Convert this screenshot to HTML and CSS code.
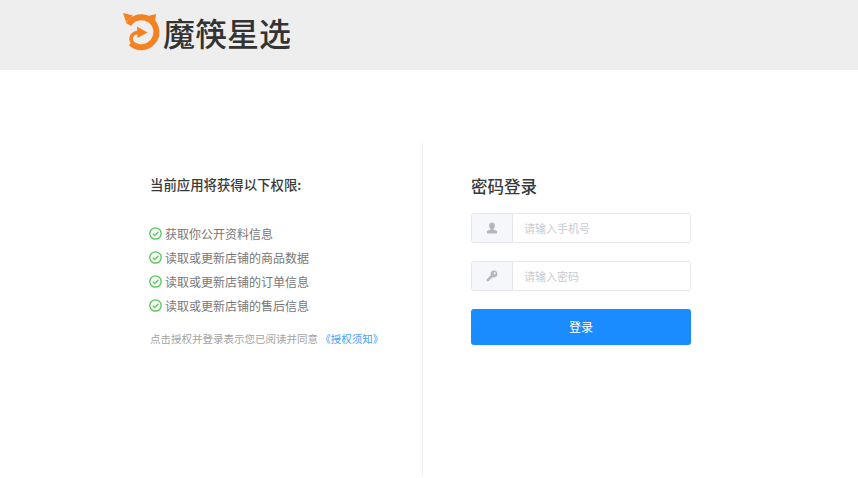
FILE: index.html
```html
<!DOCTYPE html>
<html lang="zh-CN">
<head>
<meta charset="utf-8">
<title>魔筷星选</title>
<link rel="stylesheet" href="styles.css">
</head>
<body>
<header class="top">
  <svg class="logo" width="38" height="40" viewBox="0 0 38 40" aria-hidden="true">
    <path fill="#f58220" d="M1 1 L11 3.500 L4 10 Z"/>
    <path fill="#f58220" d="M34 2 L26 4 L33 10 Z"/>
    <path fill="none" stroke="#f58220" stroke-width="6" d="M6.500 12.500 A15 15 0 1 1 9 31"/>
    <path fill="none" stroke="#f58220" stroke-width="3.500" stroke-linecap="round" d="M12 33 C6.500 27 9.500 21.500 15 20.500"/>
    <path fill="#f58220" d="M15 14.500 L25.500 20.500 L15.500 26 Z"/>
  </svg>
  <span class="brand">魔筷星选</span>
</header>
<main class="content">
  <section class="perm">
    <h2 class="perm-title">当前应用将获得以下权限:</h2>
    <ul class="perm-list">
      <li class="perm-item"><svg class="check" width="13" height="13" viewBox="0 0 13 13" aria-hidden="true"><circle cx="6.500" cy="6.500" r="5.700"/><path d="M3.700 6.600 L5.800 8.600 L9.400 4.800"/></svg>获取你公开资料信息</li>
      <li class="perm-item"><svg class="check" width="13" height="13" viewBox="0 0 13 13" aria-hidden="true"><circle cx="6.500" cy="6.500" r="5.700"/><path d="M3.700 6.600 L5.800 8.600 L9.400 4.800"/></svg>读取或更新店铺的商品数据</li>
      <li class="perm-item"><svg class="check" width="13" height="13" viewBox="0 0 13 13" aria-hidden="true"><circle cx="6.500" cy="6.500" r="5.700"/><path d="M3.700 6.600 L5.800 8.600 L9.400 4.800"/></svg>读取或更新店铺的订单信息</li>
      <li class="perm-item"><svg class="check" width="13" height="13" viewBox="0 0 13 13" aria-hidden="true"><circle cx="6.500" cy="6.500" r="5.700"/><path d="M3.700 6.600 L5.800 8.600 L9.400 4.800"/></svg>读取或更新店铺的售后信息</li>
    </ul>
    <p class="notice">点击授权并登录表示您已阅读并同意 <a class="notice-link" href="#">《授权须知》</a></p>
  </section>
  <section class="login">
    <h2 class="login-title">密码登录</h2>
    <div class="field">
      <span class="addon"><svg width="12" height="12" viewBox="0 0 12 12" aria-hidden="true"><path fill="#b4b7bd" d="M6 .5C7.900.5 8.900 1.900 8.900 3.700 8.900 5 8.300 6.100 7.500 6.700L7.500 7.500 11 9 11 11.500 1 11.500 1 9 4.500 7.500 4.500 6.700C3.700 6.100 3.100 5 3.100 3.700 3.100 1.900 4.100.5 6 .5Z"/></svg></span>
      <input class="input" type="text" placeholder="请输入手机号">
    </div>
    <div class="field">
      <span class="addon"><svg width="12" height="12" viewBox="0 0 12 12" aria-hidden="true"><path fill="#b4b7bd" fill-rule="evenodd" d="M8 .5A3.500 3.500 0 1 1 6.700 7.300L5.500 8.500 4.500 8.500 4.500 9.800 3.200 9.800 3.200 11 .8 11.500.5 9.500 4.700 5.200A3.500 3.500 0 0 1 8 .5ZM8.700 2.200A1 1 0 1 0 8.700 4.200 1 1 0 1 0 8.700 2.200Z"/></svg></span>
      <input class="input" type="password" placeholder="请输入密码">
    </div>
    <button class="submit" type="button">登录</button>
  </section>
</main>
</body>
</html>
```
FILE: styles.css
```css
* {
  box-sizing: border-box;
}

html, body {
  margin: 0;
  padding: 0;
  background: #fff;
  overflow: hidden;
}

body {
  font-family: "Noto Sans CJK SC", "Liberation Sans", sans-serif;
  height: 478px;
}

.top {
  height: 70px;
  background: #eeeeee;
  display: flex;
  align-items: center;
  padding: 0 0 7px 122px;
  gap: 3px;
}

.logo {
  flex: none;
}

.brand {
  font-size: 32px;
  line-height: 40px;
  font-weight: 500;
  color: #333;
  white-space: nowrap;
}

.content {
  display: flex;
  margin: 73px 0 0 0;
  height: 332px;
}

.perm {
  width: 423px;
  padding: 31px 0 0 150px;
  border-right: 1px solid #eeeeee;
}

.perm-title {
  margin: 0;
  font-size: 13.4px;
  line-height: 20px;
  font-weight: 500;
  color: #3a3a3a;
}

.perm-list {
  list-style: none;
  margin: 27px 0 0 -1px;
  padding: 0;
}

.perm-item {
  display: flex;
  align-items: center;
  gap: 3px;
  height: 24px;
  font-size: 12px;
  color: #777;
}

.check {
  flex: none;
  fill: none;
  stroke: #52c752;
  stroke-width: 1.3;
}

.notice {
  margin: 12px 0 0;
  font-size: 10.5px;
  line-height: 20px;
  color: #a3a3a3;
  white-space: nowrap;
}

.notice-link {
  color: #3f9fff;
  text-decoration: none;
}

.login {
  width: 268px;
  padding: 31px 0 0 48px;
}

.login-title {
  margin: 0 0 15px;
  font-size: 16.5px;
  line-height: 24px;
  font-weight: 500;
  color: #3a3a3a;
}

.field {
  display: flex;
  width: 220px;
  height: 30px;
  margin-bottom: 18px;
  border: 1px solid #e4e7ed;
  border-radius: 3px;
  overflow: hidden;
}

.addon {
  flex: none;
  width: 41px;
  display: flex;
  align-items: center;
  justify-content: center;
  background: #f5f7fa;
  border-right: 1px solid #e4e7ed;
}

.input {
  flex: 1;
  min-width: 0;
  border: 0;
  outline: 0;
  padding: 0 11px;
  font-family: inherit;
  font-size: 11px;
  color: #333;
  background: #fff;
}

.input::placeholder {
  color: #c8cbd2;
}

.submit {
  display: block;
  width: 220px;
  height: 36px;
  border: 0;
  border-radius: 3px;
  background: #1a8cff;
  color: #fff;
  font-family: inherit;
  font-size: 12px;
  padding: 0 0 2px;
}
```
